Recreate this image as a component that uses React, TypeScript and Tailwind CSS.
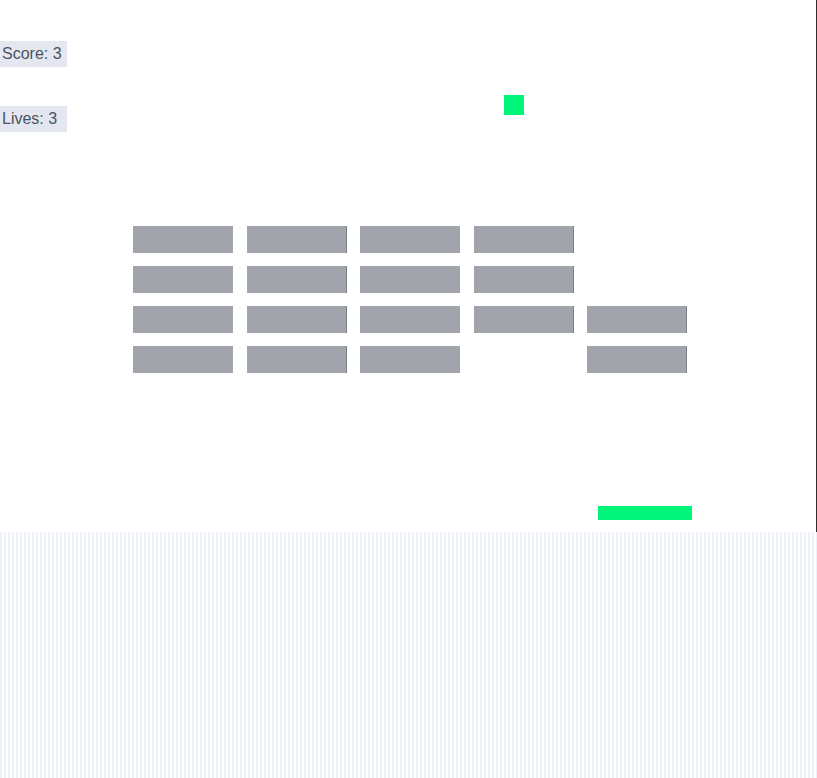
const rows = [
  [1, 1, 1, 1, 0],
  [1, 1, 1, 1, 0],
  [1, 1, 1, 1, 1],
  [1, 1, 1, 0, 1],
]

function Brick({ alive, edge }: { alive: number; edge: boolean }) {
  if (!alive) return <div className="h-[27px] w-[100px]" />
  return (
    <div
      className={`h-[27px] w-[100px] bg-[#a2a4ac] ${edge ? 'border-r border-[#7d7f86]' : ''}`}
    />
  )
}

export default function App() {
  return (
    <div className="w-[817px] h-[778px] bg-white font-['Liberation_Sans',Arial,sans-serif]">
      <div className="relative w-[817px] h-[532px] bg-white border-r border-[#2d2d2d]">
        <div className="pt-[41px] flex flex-col items-start gap-[39px]">
          <div className="w-[67px] h-[26px] pl-[2px] bg-[#e4e7ef] text-[16px] leading-[26px] text-[#4b5263]">
            Score: 3
          </div>
          <div className="w-[67px] h-[26px] pl-[2px] bg-[#e4e7ef] text-[16px] leading-[26px] text-[#4b5263]">
            Lives: 3
          </div>
        </div>

        {/* ball */}
        <div className="absolute left-[504px] top-[95px] w-[20px] h-[20px] bg-[#00f57a]" />

        {/* bricks */}
        <div className="absolute left-[133px] top-[226px] flex flex-col gap-[13px]">
          {rows.map((row, r) => (
            <div key={r} className="flex gap-[13.5px]">
              {row.map((alive, c) => (
                <Brick key={c} alive={alive} edge={c === 1 || c === 3 || c === 4} />
              ))}
            </div>
          ))}
        </div>

        {/* paddle */}
        <div className="absolute left-[598px] top-[506px] w-[94px] h-[14px] bg-[#00f57a]" />
      </div>
      <div className="w-[817px] h-[246px] bg-[repeating-linear-gradient(90deg,#eef1f8_0px,#eef1f8_2px,#ffffff_2px,#ffffff_4px)]" />
    </div>
  )
}
